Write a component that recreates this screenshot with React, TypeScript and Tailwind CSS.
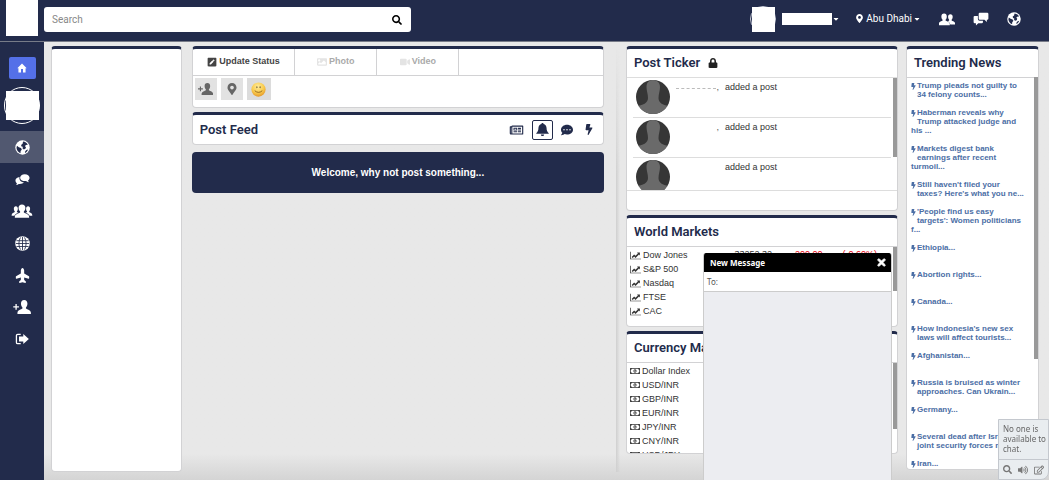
import React, { FC, ReactNode } from "react";
import clsx from "clsx";
import {
  FaBolt,
  FaCaretDown,
  FaCommentDots,
  FaImage,
  FaLock,
  FaMapMarkerAlt,
  FaPenSquare,
  FaPlane,
  FaRegEdit,
  FaRegMoneyBillAlt,
  FaRegNewspaper,
  FaSearch,
  FaTimes,
  FaVideo,
  FaVolumeUp,
} from "react-icons/fa";

interface IIcon {
  className?: string;
}
interface IPanel {
  className?: string;
  children?: ReactNode;
}
interface IPanelTitle {
  children: ReactNode;
}
interface IQuoteList {
  items: string[];
  icon: ReactNode;
}

const BUST =
  "M8 0c2.4 0 3.7 1.7 3.7 4.1 0 1.900-.7 3.500-1.700 4.400v1.200c1.300 1.100 5.700 1.700 5.700 5V16H.3v-1.300c0-3.300 4.400-3.900 5.700-5V8.500C5 7.600 4.300 6 4.300 4.100 4.300 1.700 5.600 0 8 0z";

const UserAddIcon: FC<IIcon> = ({ className }) => (
  <svg viewBox="0 0 20 16" className={className} fill="currentColor">
    <path transform="translate(4.500 0)" d={BUST} />
    <path d="M2.500 4.500h1.500V7h2.500v1.500H4V11H2.500V8.500H0V7h2.500z" />
  </svg>
);

const FriendsIcon: FC<IIcon> = ({ className }) => (
  <svg viewBox="0 0 20 16" className={className} fill="currentColor">
    <path transform="translate(8 2) scale(.78 .8)" d={BUST} />
    <path
      transform="translate(-1 1) scale(.92)"
      d={BUST}
      stroke="#222b4b"
      strokeWidth="1"
      paintOrder="stroke"
    />
  </svg>
);

const GroupIcon: FC<IIcon> = ({ className }) => (
  <svg viewBox="0 0 24 16" className={className} fill="currentColor">
    <path transform="translate(0 2.500) scale(.62 .68)" d={BUST} />
    <path transform="translate(14 2.500) scale(.62 .68)" d={BUST} />
    <path
      transform="translate(3.500 .5) scale(1.060 .95)"
      d={BUST}
      stroke="#222b4b"
      strokeWidth="1.200"
      paintOrder="stroke"
    />
  </svg>
);

const ChatBoxesIcon: FC<IIcon> = ({ className }) => (
  <svg viewBox="0 0 20 18" className={className} fill="currentColor">
    <path d="M8.500 1h9.500q1.500 0 1.500 1.500v6q0 1.500-1.500 1.500h-.5v3l-3-3H8.500Q7 10 7 8.500v-6Q7 1 8.500 1z" />
    <path d="M6 5v4q0 2.300 2.200 2.300h4.300V13q0 1.500-1.500 1.500H6.500l-3 3v-3H2Q.5 14.500.5 13V6.500Q.5 5 2 5z" />
  </svg>
);

const BubblesIcon: FC<IIcon> = ({ className }) => (
  <svg viewBox="0 0 16 12" className={className} fill="currentColor">
    <path d="M4.800 3.200C2 3.600.3 5.200.3 7.100c0 1.200.6 2.200 1.600 2.900 0 .8-.4 1.300-1 1.900 1.300 0 2.300-.4 3-1.100 2.600.3 4.700-.5 5.600-1.800C6.300 8.800 4 6.600 4.800 3.200z" />
    <path d="M10.500.2c3 0 5.200 1.700 5.200 3.800 0 1.200-.6 2.200-1.600 2.900 0 .8.300 1.400.9 2-1.300 0-2.300-.5-3-1.200C8.300 8.100 5.400 6.500 5.400 4 5.400 1.900 7.600.2 10.500.2z" />
  </svg>
);

const EarthIcon: FC<IIcon> = ({ className }) => (
  <svg viewBox="0 0 16 16" className={className}>
    <circle cx="8" cy="8" r="7.700" fill="white" />
    <path
      d="M8.600 1.700c2.200.2 4.200 1.500 5.100 3.400l-2.200.3-.8 1.300 1 1.100-.6 1.600-1.700.7-1.300-1 .2-1.800-1.400-.5-.4-1.600 1.600-1.200z"
      fill="#222b4b"
    />
    <path
      d="M2.100 6.200l2 1.400 2.300.9.900 1.600-1.300 1.500-.2 2.400C3.400 13 1.700 10.900 1.600 8.300zM12.200 10.600l1.800-.6c-.6 1.700-1.800 3-3.400 3.800l.3-1.700z"
      fill="#222b4b"
    />
  </svg>
);

const GridGlobeIcon: FC<IIcon> = ({ className }) => (
  <svg viewBox="0 0 16 16" className={className} fill="none">
    <circle cx="8" cy="8" r="7.800" fill="white" />
    <path
      d="M1.500 5h13M.8 8h14.400M1.500 11.200h13M8 1v14M5.800 1.500Q2.500 8 5.800 14.500M10.200 1.500Q13.500 8 10.200 14.500"
      stroke="#222b4b"
      strokeWidth=".9"
    />
  </svg>
);

const HomeIcon: FC<IIcon> = ({ className }) => (
  <svg viewBox="0 0 16 16" className={className} fill="currentColor">
    <path d="M8 .8 15.500 8.200H13.700V15H9.600V9.500H6.400V15H2.300V8.200H.5z" />
  </svg>
);

const BellIcon: FC<IIcon> = ({ className }) => (
  <svg viewBox="0 0 16 16" className={className} fill="currentColor">
    <path d="M8 0c.8 0 1.300.5 1.300 1.300C11.700 1.900 13 3.900 13 6.300c0 3.200 1 4.900 2.700 6.200v.8H.3v-.8C2 11.200 3 9.500 3 6.300c0-2.400 1.300-4.400 3.700-5C6.700.5 7.200 0 8 0zM6 14h4c0 1.200-.9 2-2 2s-2-.8-2-2z" />
  </svg>
);

const ChartIcon: FC<IIcon> = ({ className }) => (
  <svg viewBox="0 0 20 16" className={className} fill="currentColor">
    <path d="M0 1h1.300v12.700H20V15H0z" />
    <path d="M3 10.500 7.500 6l2.500 2.500 4.300-4.300-1.500-1.500H18v5.200l-1.700-1.700L10 12.500 7.500 10 5 12.500z" />
  </svg>
);

const LogoutIcon: FC<IIcon> = ({ className }) => (
  <svg viewBox="0 0 16 14" className={className} fill="currentColor">
    <path
      d="M6.500 1.500H3Q1.500 1.500 1.500 3v8Q1.500 12.500 3 12.500h3.500"
      fill="none"
      stroke="currentColor"
      strokeWidth="1.500"
    />
    <path d="M9.500 1.300 16 7l-6.500 5.700V9.800h-5V4.200h5z" />
  </svg>
);

const SmileIcon: FC<IIcon> = ({ className }) => (
  <svg viewBox="0 0 16 16" className={className}>
    <defs>
      <radialGradient id="smile" cx=".45" cy=".3" r=".7">
        <stop offset="0" stopColor="#ffec9c" />
        <stop offset=".6" stopColor="#f9cb4d" />
        <stop offset="1" stopColor="#e59a2b" />
      </radialGradient>
    </defs>
    <circle cx="8" cy="8" r="7.600" fill="url(#smile)" />
    <ellipse cx="6.300" cy="5.500" rx=".6" ry="1.100" fill="#5c4a28" />
    <ellipse cx="9.700" cy="5.500" rx=".6" ry="1.100" fill="#5c4a28" />
    <path
      d="M4 9.300Q8 12.800 12 9.300"
      fill="none"
      stroke="#80571d"
      strokeWidth=".9"
    />
  </svg>
);

const Silhouette: FC<IIcon> = ({ className }) => (
  <svg viewBox="0 0 34 34" className={className}>
    <defs>
      <clipPath id="round">
        <circle cx="17" cy="17" r="17" />
      </clipPath>
    </defs>
    <g clipPath="url(#round)">
      <rect width="34" height="34" fill="#363636" />
      <path
        d="M10.500 7c0-5 3-7 6.500-7s7 2 7 7c0 4-1.500 7-1.500 11 0 5 4.500 7.500 11.500 8v8H0v-8c7-.5 12-3 12-8 0-4-1.500-7-1.500-11z"
        fill="#6a6a6a"
      />
    </g>
  </svg>
);

const Panel: FC<IPanel> = ({ className, children }) => (
  <section
    className={clsx(
      "overflow-hidden rounded border border-t-[3px] border-[#d2d2d4] border-t-[#222b4b] bg-white",
      className
    )}
  >
    {children}
  </section>
);

const PanelTitle: FC<IPanelTitle> = ({ children }) => (
  <h2 className="flex h-7 items-center gap-2 px-[7px] font-[Roboto,sans-serif] text-[13px] font-semibold text-[#222b4b]">
    {children}
  </h2>
);

const QuoteList: FC<IQuoteList> = ({ items, icon }) => (
  <ul className="px-[3px] text-[9px] leading-[14px]">
    {items.map((item) => (
      <li key={item} className="flex items-center gap-[2px]">
        {icon}
        {item}
      </li>
    ))}
  </ul>
);

const navItems = [
  { label: "World", icon: <EarthIcon className="size-[15px]" />, active: true },
  { label: "Messages", icon: <BubblesIcon className="h-[11px] w-[15px]" /> },
  { label: "Groups", icon: <GroupIcon className="h-[14px] w-[22px]" /> },
  { label: "Sites", icon: <GridGlobeIcon className="size-[15px]" /> },
  { label: "Travel", icon: <FaPlane className="size-[15px] -rotate-90" /> },
  { label: "Invite", icon: <UserAddIcon className="h-[14px] w-[18px]" /> },
  { label: "Log out", icon: <LogoutIcon className="h-3 w-[14px]" /> },
];

const tabs = [
  { label: "Update Status", icon: <FaPenSquare className="size-[10px]" /> },
  { label: "Photo", icon: <FaImage className="size-[10px] text-[#e4e4e4]" /> },
  { label: "Video", icon: <FaVideo className="size-[10px] text-[#e4e4e4]" /> },
];

const markets = ["Dow Jones", "S&P 500", "Nasdaq", "FTSE", "CAC"];

const currencies = [
  "Dollar Index",
  "USD/INR",
  "GBP/INR",
  "EUR/INR",
  "JPY/INR",
  "CNY/INR",
  "USD/JPY",
];

const news = [
  "Trump pleads not guilty to 34 felony counts...",
  "Haberman reveals why Trump attacked judge and his ...",
  "Markets digest bank earnings after recent turmoil...",
  "Still haven't filed your taxes? Here's what you ne...",
  "'People find us easy targets': Women politicians f...",
  "Ethiopia...",
  "Abortion rights...",
  "Canada...",
  "How Indonesia's new sex laws will affect tourists...",
  "Afghanistan...",
  "Russia is bruised as winter approaches. Can Ukrain...",
  "Germany...",
  "Several dead after Israeli joint security forces r...",
  "Iran...",
];

const Header = () => (
  <header className="flex h-[42px] items-center border-b border-[#777b88] bg-[#222b4b] pr-7 pl-[6px] text-white">
    <a href="#" aria-label="Logo" className="mb-[5px] h-9 w-8 bg-white" />
    <form className="mb-[2px] ml-[6px] flex h-[25px] w-[367px] max-w-1/2 items-center rounded-[3px] bg-white">
      <input
        type="text"
        aria-label="Search"
        placeholder="Search"
        className="h-full min-w-0 flex-1 px-2 font-[Roboto,sans-serif] text-[10px] text-gray-700 outline-none placeholder:text-[#888]"
      />
      <button type="button" aria-label="Search" className="px-[9px] text-black">
        <FaSearch className="size-[10px]" />
      </button>
    </form>
    <div className="mb-1 ml-auto flex items-center font-[Roboto,sans-serif] text-[10px]">
      <button
        type="button"
        aria-label="Profile"
        className="flex items-center"
      >
        <span className="flex size-[26px] justify-end rounded-full border border-[#c8ccd8]">
          <span className="h-[25px] w-[23px] shrink-0 bg-white" />
        </span>
        <span className="ml-[6px] h-3 w-[50px] bg-white" />
        <FaCaretDown className="size-2" />
      </button>
      <button type="button" className="ml-4 flex items-center gap-[3px]">
        <FaMapMarkerAlt className="h-[9px] w-[7px]" />
        Abu Dhabi
        <FaCaretDown className="-ml-[2px] size-2" />
      </button>
      <nav className="ml-[18px] flex items-center gap-[18px]">
        <a href="#" aria-label="Friends">
          <FriendsIcon className="h-[14px] w-4" />
        </a>
        <a href="#" aria-label="Chats">
          <ChatBoxesIcon className="h-[14px] w-4" />
        </a>
        <a href="#" aria-label="World">
          <EarthIcon className="size-[14px]" />
        </a>
      </nav>
    </div>
  </header>
);

const Sidebar = () => (
  <nav className="flex w-11 shrink-0 flex-col items-center bg-[#222b4b] pt-[15px] text-white">
    <a
      href="#"
      aria-label="Home"
      className="grid h-[22px] w-[27px] place-items-center rounded-[2px] bg-[#5470e8]"
    >
      <HomeIcon className="size-[10px]" />
    </a>
    <a
      href="#"
      aria-label="My profile"
      className="mt-2 mb-[7px] grid h-[37px] w-9 place-items-center rounded-full border border-white"
    >
      <span className="h-[29px] w-[33px] bg-white" />
    </a>
    {navItems.map((item) => (
      <a
        key={item.label}
        href="#"
        aria-label={item.label}
        className={clsx(
          "grid h-8 w-full place-items-center",
          item.active && "bg-[#515870]"
        )}
      >
        {item.icon}
      </a>
    ))}
  </nav>
);

const Composer = () => (
  <Panel className="pb-[7px]">
    <div className="flex h-[27px] border-b border-[#d2d2d4] text-[9px] font-bold text-[#aaa]">
      {tabs.map((tab, index) => (
        <button
          key={tab.label}
          type="button"
          className={clsx(
            "flex items-center justify-center gap-[2px] border-r border-[#d2d2d4]",
            index === 0 ? "w-1/4 text-[#444]" : "w-1/5"
          )}
        >
          {tab.icon}
          {tab.label}
        </button>
      ))}
    </div>
    <div className="flex gap-1 px-[2px] pt-[2px] text-[#666]">
      <button
        type="button"
        aria-label="Tag people"
        className="grid h-[22px] w-[22px] place-items-center bg-[#e2e2e2]"
      >
        <UserAddIcon className="h-3 w-[15px]" />
      </button>
      <button
        type="button"
        aria-label="Add place"
        className="grid h-[22px] w-[22px] place-items-center bg-[#e2e2e2]"
      >
        <FaMapMarkerAlt className="h-3 w-[10px]" />
      </button>
      <button
        type="button"
        aria-label="Add emoji"
        className="grid h-[22px] w-6 place-items-center bg-[#dcdcdc]"
      >
        <SmileIcon className="size-[15px]" />
      </button>
    </div>
  </Panel>
);

const Feed = () => (
  <>
    <Panel className="mt-1 flex items-center justify-between pr-2">
      <PanelTitle>Post Feed</PanelTitle>
      <div className="flex h-[29px] items-center text-[#222b4b]">
        <button type="button" aria-label="News">
          <FaRegNewspaper className="h-3 w-[15px]" />
        </button>
        <button
          type="button"
          aria-label="Alerts"
          className="ml-2 grid h-5 w-[21px] place-items-center rounded-[2px] border border-[#222b4b]"
        >
          <BellIcon className="size-[13px]" />
        </button>
        <button type="button" aria-label="Comments" className="ml-2">
          <FaCommentDots className="size-3" />
        </button>
        <button type="button" aria-label="Activity" className="ml-[10px]">
          <FaBolt className="h-[11px] w-3" />
        </button>
      </div>
    </Panel>
    <div className="mt-[7px] grid h-[41px] place-items-center rounded bg-[#222b4b] text-[10px] font-bold text-white">
      Welcome, why not post something...
    </div>
  </>
);

const PostTicker = () => (
  <Panel className="pb-[19px]">
    <PanelTitle>
      Post Ticker
      <FaLock className="size-[10px] text-[#222]" />
    </PanelTitle>
    <div className="relative h-[114px] overflow-hidden border-y border-[#ddd]">
      <ul className="px-[6px]">
        {[0, 1, 2].map((index) => (
          <li
            key={index}
            className="flex h-10 items-start border-b border-[#ddd] px-[3px] pt-[2px]"
          >
            <Silhouette className="size-[34px] shrink-0" />
            <span className="flex w-[55px] justify-end px-[6px] text-[9px] leading-[14px] text-[#555]">
              {index === 0 && (
                <span className="mt-2 h-0 w-10 border-t border-dashed border-[#bbb]" />
              )}
              {index < 2 && ","}
            </span>
            <span className="text-[9px] leading-[14px]">added a post</span>
          </li>
        ))}
      </ul>
      <span className="absolute top-0 right-0 h-[79px] w-1 bg-[#999]" />
    </div>
  </Panel>
);

const WorldMarkets = () => (
  <Panel className="mt-1">
    <PanelTitle>World Markets</PanelTitle>
    <div className="relative h-[80px] overflow-hidden border-t border-[#d2d2d4] pt-[1px]">
      <div className="flex justify-between pr-5">
        <QuoteList
          items={markets}
          icon={<ChartIcon className="h-[9px] w-[11px]" />}
        />
        <p className="flex gap-5 text-[9px] leading-[12px]">
          <span>33252.32</span>
          <span className="text-red-600">-200.00</span>
          <span className="text-red-600">(-0.60%)</span>
        </p>
      </div>
      <span className="absolute top-0 right-0 h-11 w-1 bg-[#999]" />
    </div>
  </Panel>
);

const CurrencyMarkets = () => (
  <Panel className="mt-1">
    <PanelTitle>Currency Markets</PanelTitle>
    <div className="relative h-[91px] overflow-hidden border-t border-[#d2d2d4] pt-[1px]">
      <QuoteList
        items={currencies}
        icon={<FaRegMoneyBillAlt className="size-[10px]" />}
      />
      <span className="absolute top-0 right-0 h-[66px] w-1 bg-[#999]" />
    </div>
  </Panel>
);

const TrendingNews = () => (
  <Panel className="relative">
    <PanelTitle>Trending News</PanelTitle>
    <ul className="border-t border-[#d2d2d4] pt-[3px] pr-3 pl-1 text-[8px] leading-[9px] font-bold text-[#4b6ea5]">
      {news.map((title) => (
        <li
          key={title}
          className="mb-[9px] min-h-[18px] last:mb-0 last:h-[10px] last:min-h-0 last:overflow-hidden"
        >
          <a href="#">
            <FaBolt className="float-left h-[18px] w-[6px] pt-[2px] pr-[1px] pb-[9px]" />
            {title}
          </a>
        </li>
      ))}
    </ul>
    <span className="absolute top-[28px] right-0 h-[282px] w-1 bg-[#999]" />
  </Panel>
);

const MessageWindow = () => (
  <section className="fixed right-[157px] bottom-0 flex h-[227px] w-[189px] flex-col overflow-hidden rounded-t-[3px] border-x border-[#ccc] bg-[#ecedf1] font-['Noto_Sans',sans-serif] text-[8px]">
    <div className="flex h-[19px] items-center justify-between bg-black pr-1 pl-[6px] font-bold text-white">
      New Message
      <button type="button" aria-label="Close">
        <FaTimes className="size-[11px] stroke-white stroke-[40]" />
      </button>
    </div>
    <label className="flex h-5 items-center border-b border-[#ccc] bg-white px-[3px] text-[#555]">
      To:
      <input type="text" className="ml-1 min-w-0 flex-1 outline-none" />
    </label>
  </section>
);

const ChatDock = () => (
  <aside className="fixed right-0 bottom-0 w-[51px] rounded-br-lg border border-[#c4c8ce] bg-[#e9edf0] font-['Noto_Sans',sans-serif] text-[8px] leading-[10px] text-[#666]">
    <p className="pt-1 pb-[5px] pl-1">No one is available to chat.</p>
    <div className="flex h-5 items-center justify-between border-t border-[#c4c8ce] px-1 text-[#777]">
      <button type="button" aria-label="Search chat">
        <FaSearch className="size-[9px]" />
      </button>
      <button type="button" aria-label="Sound">
        <FaVolumeUp className="size-[10px]" />
      </button>
      <button type="button" aria-label="New chat">
        <FaRegEdit className="size-[10px]" />
      </button>
    </div>
  </aside>
);

const App = () => {
  return (
    <div className="flex min-h-screen flex-col bg-[#e8e8e8] font-['Liberation_Sans',Arial,sans-serif] text-[#333]">
      <Header />
      <div className="flex flex-1">
        <Sidebar />
        <main className="flex min-w-0 flex-1 bg-linear-to-t from-[#d4d4d4] to-[#e8e8e8] to-6% pt-1 pr-[10px] pb-2 pl-[7px]">
          <div className="grid min-w-0 flex-1 grid-cols-[131fr_413fr] gap-[10px]">
            <Panel />
            <div>
              <Composer />
              <Feed />
            </div>
          </div>
          <div className="ml-3 w-[10px] shrink-0 bg-linear-to-r from-[#cfcfcf] to-transparent to-40% mask-t-from-70%" />
          <div className="grid w-[413px] shrink-0 grid-cols-[272fr_133fr] items-start gap-2">
            <div>
              <PostTicker />
              <WorldMarkets />
              <CurrencyMarkets />
            </div>
            <TrendingNews />
          </div>
        </main>
      </div>
      <MessageWindow />
      <ChatDock />
    </div>
  );
};

export default App;
